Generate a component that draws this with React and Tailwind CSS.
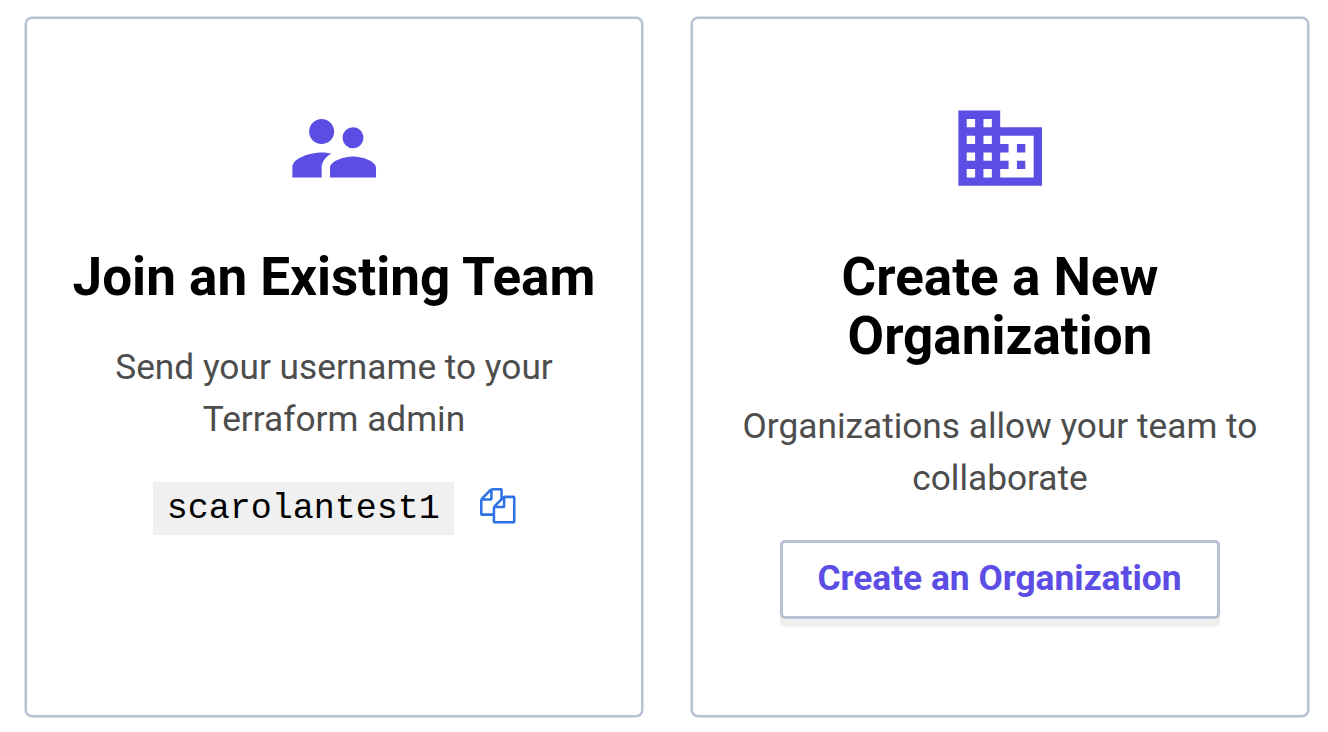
import { MdSupervisorAccount, MdBusiness } from 'react-icons/md';

function CopyIcon() {
  return (
    <svg viewBox="0 0 1792 1792" className="size-[35.5px] overflow-visible fill-current" aria-hidden="true">
      <path d="M1696 384q40 0 68 28t28 68v1216q0 40-28 68t-68 28h-960q-40 0-68-28t-28-68v-288h-544q-40 0-68-28t-28-68v-672q0-40 20-88t48-76l408-408q28-28 76-48t88-20h416q40 0 68 28t28 68v328q68-40 128-40h416zm-544 213l-299 299h299v-299zm-640-384l-299 299h299v-299zm196 647l316-316v-416h-384v416q0 40-28 68t-68 28h-416v640h512v-256q0-40 20-88t48-76zm956 804v-1152h-384v416q0 40-28 68t-68 28h-416v640h896z" />
    </svg>
  );
}

function Card({ icon: Icon, title, description, children }) {
  return (
    <section className="flex h-[700px] w-[618px] flex-col items-center rounded-[7px] border-2 border-[#b8c2d3] bg-white px-10 pt-[78.5px] text-center shadow-[0_0_0_0.5px_#b8c2d3]">
      <Icon className="size-[100.4px] shrink-0 text-[#5c4ee5]" />
      <h2 className="mt-[50.6px] text-[53px] leading-[59px] font-bold whitespace-nowrap text-black">{title}</h2>
      <p className="mt-[34px] text-[35.25px] leading-[52px] text-[#4d4d4d]">{description}</p>
      {children}
    </section>
  );
}

export default function App() {
  return (
    <main className="flex h-[732px] w-[1328px] gap-12 overflow-hidden bg-white pt-[17px] pl-[25px] font-['Roboto',sans-serif]">
      <Card
        icon={MdSupervisorAccount}
        title="Join an Existing Team"
        description={<>Send your username to your<br />Terraform admin</>}
      >
        <div className="mt-[37px] flex items-center gap-[26px]">
          <code className="h-[53px] w-[301px] bg-[#f0f0f0] font-['Liberation_Mono',monospace] text-[35px] leading-[54px] text-black">
            scarolantest1
          </code>
          <button type="button" aria-label="Copy username" className="-mt-[6px] text-[#2e71e5]">
            <CopyIcon />
          </button>
        </div>
      </Card>
      <Card
        icon={MdBusiness}
        title={<>Create a New<br />Organization</>}
        description={<>Organizations allow your team to<br />collaborate</>}
      >
        <button
          type="button"
          className="mt-[36px] h-[79px] w-[440px] rounded-[5px] border-3 border-[#b8c2d3] bg-white pr-px pb-[4px] text-[35.35px] leading-[52px] font-bold text-[#5c4ee5] shadow-[0_8px_2px_0_#efefef]"
        >
          Create an Organization
        </button>
      </Card>
    </main>
  );
}
